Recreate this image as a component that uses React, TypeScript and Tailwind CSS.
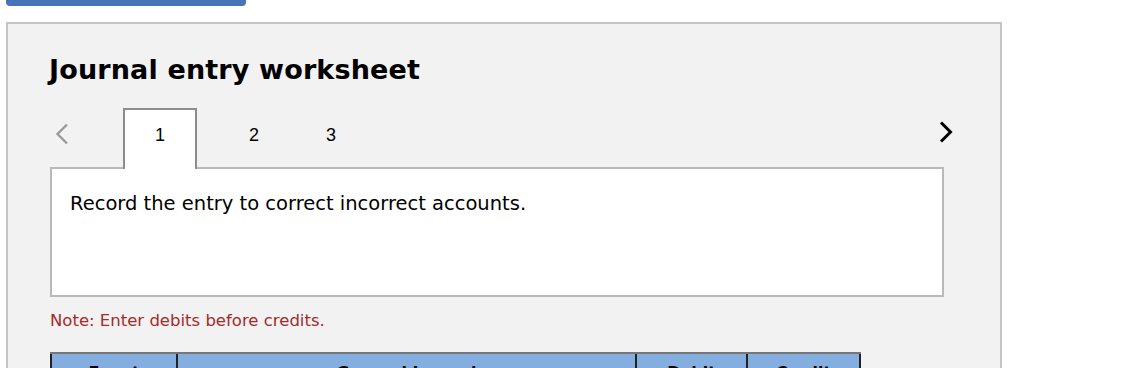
import React from 'react';

const tabs = [
  { key: 1, label: '1', active: true },
  { key: 2, label: '2', active: false },
  { key: 3, label: '3', active: false },
];

function Chevron({ dir, className }: { dir: 'left' | 'right'; className: string }) {
  return (
    <svg width="14" height="22" viewBox="0 0 14 22" className={className}>
      {dir === 'left' ? (
        <polyline points="12,1.5 2.5,11 12,20.5" fill="none" stroke="currentColor" strokeWidth="2.4" />
      ) : (
        <polyline points="2,1.5 11.5,11 2,20.5" fill="none" stroke="currentColor" strokeWidth="3" />
      )}
    </svg>
  );
}

export default function App() {
  return (
    <div className="w-[1138px] h-[368px] overflow-hidden bg-white font-['DejaVu_Sans',Verdana,sans-serif]">
      {/* top button edge */}
      <div className="ml-[6px] w-[240px] h-[6px] bg-[#4674b6] rounded-b-[4px]" />

      <div className="ml-[6px] mt-[16px] w-[996px] h-[400px] border-2 border-[#c4c4c4] bg-[#f2f2f2] pt-[30px] pl-[42px] pr-[56px]">
        <h2 className="text-[27px] leading-[32px] font-bold text-black -ml-[1px] tracking-[0.15px]">Journal entry worksheet</h2>

        {/* Tabs */}
        <div className="relative z-10 mt-[22px] -mb-[2px] h-[61px] flex items-start">
          <Chevron dir="left" className="ml-[5px] mt-[15px] text-[#9a9a9a]" />
          <div className="ml-[54px] flex items-start h-full">
            {tabs.map((tab, i) => (
              <div
                key={tab.key}
                className={`h-full w-[74px] pt-[15px] text-center font-['Liberation_Sans',Arial,sans-serif] text-[18px] leading-[20px] text-black ${
                  tab.active
                    ? 'bg-white border-2 border-b-0 border-[#8c8c8c]'
                    : 'border-2 border-b-0 border-transparent'
                } ${i === 1 ? 'ml-[20px]' : ''} ${i === 2 ? 'ml-[3px]' : ''}`}
              >
                {tab.label}
              </div>
            ))}
          </div>
          <Chevron dir="right" className="ml-auto -mr-[9px] mt-[13px] text-black" />
        </div>

        {/* Instruction box */}
        <div className="h-[130px] border-2 border-[#b9b9b9] bg-white pl-[18px] pt-[23px]">
          <p className="text-[19.5px] leading-[24px] text-black">Record the entry to correct incorrect accounts.</p>
        </div>

        <p className="mt-[14px] text-[16.5px] leading-[20px] text-[#a52a2a]">Note: Enter debits before credits.</p>

        {/* Journal table header */}
        <div className="mt-[21px] w-[811px] flex border-t-2 border-[#777777] bg-[#84aee0] text-[16px] leading-[20px] font-bold text-black">
          <div className="w-[128px] h-[40px] pt-[9px] text-center border-l-2 border-r-2 border-[#222222]">Event</div>
          <div className="w-[459px] h-[40px] pt-[9px] text-center border-r-2 border-[#222222]">General Journal</div>
          <div className="w-[111px] h-[40px] pt-[9px] text-center border-r-2 border-[#222222]">Debit</div>
          <div className="w-[113px] h-[40px] pt-[9px] text-center border-r-2 border-[#222222]">Credit</div>
        </div>
      </div>
    </div>
  );
}
